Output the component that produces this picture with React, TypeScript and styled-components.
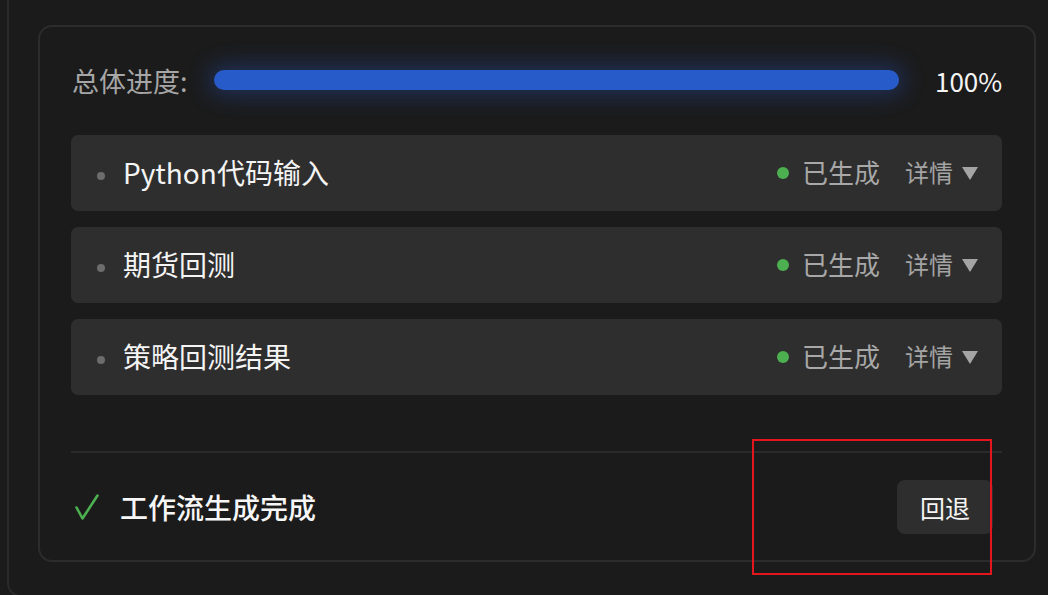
import styled, { createGlobalStyle } from 'styled-components';

const GlobalStyle = createGlobalStyle`
  html, body {
    margin: 0;
    padding: 0;
    background: #1b1b1b;
    overflow: hidden;
  }
  body {
    font-family: 'Noto Sans CJK SC', 'Noto Sans', sans-serif;
    color: #f2f2f2;
  }
`;

const STEPS = ['Python代码输入', '期货回测', '策略回测结果'];

export default function App() {
  return (
    <Page>
      <GlobalStyle />
      <OuterPanel>
        <Card>
          <ProgressRow>
            <ProgressLabel>总体进度:</ProgressLabel>
            <Track>
              <Fill style={{ width: '100%' }} />
            </Track>
            <Percent>100%</Percent>
          </ProgressRow>

          <StepList>
            {STEPS.map(step => (
              <StepRow key={step}>
                <Bullet />
                <StepTitle>{step}</StepTitle>
                <StatusDot />
                <StatusText>已生成</StatusText>
                <DetailToggle>
                  详情
                  <Caret viewBox="0 0 16 13">
                    <path d="M0 0 H16 L8 13 Z" fill="currentColor" />
                  </Caret>
                </DetailToggle>
              </StepRow>
            ))}
          </StepList>

          <Footer>
            <DoneInfo>
              <CheckMark viewBox="0 0 24 26">
                <path
                  d="M1.5 13.5 L7.5 24.5 L22.5 1.5"
                  fill="none"
                  stroke="#4caf50"
                  strokeWidth="2.6"
                  strokeLinecap="round"
                  strokeLinejoin="round"
                />
              </CheckMark>
              <DoneText>工作流生成完成</DoneText>
            </DoneInfo>
            <BackButton>回退</BackButton>
          </Footer>
        </Card>
      </OuterPanel>
      <Annotation />
    </Page>
  );
}

const Page = styled.div`
  position: relative;
  width: 1048px;
  height: 595px;
  overflow: hidden;
`;

const OuterPanel = styled.div`
  box-sizing: border-box;
  margin: -20px 0 0 7px;
  width: 1100px;
  height: 617px;
  border: 2px solid #2a2a2a;
  border-radius: 14px;
  padding: 43px 0 0 29px;
`;

const Card = styled.div`
  box-sizing: border-box;
  width: 998px;
  height: 537px;
  border: 2px solid #2c2c2c;
  border-radius: 14px;
  background: #1b1b1b;
  padding: 33px 32px 0 31px;
  display: flex;
  flex-direction: column;
`;

const ProgressRow = styled.div`
  display: flex;
  align-items: center;
  height: 40px;
`;

const ProgressLabel = styled.span`
  font-size: 27px;
  color: #a6a6a6;
  width: 142px;
  flex-shrink: 0;
  margin-left: 1px;
`;

const Track = styled.div`
  flex: 1;
  height: 20px;
  border-radius: 10px;
  background: #2a2a2a;
  box-shadow: 0 0 22px 6px rgba(40, 90, 210, 0.32);
`;

const Fill = styled.div`
  height: 100%;
  border-radius: 10px;
  background: #285bca;
`;

const Percent = styled.span`
  font-size: 26px;
  color: #f5f5f5;
  margin-left: 36px;
  width: 67px;
  text-align: right;
  flex-shrink: 0;
`;

const StepList = styled.div`
  display: flex;
  flex-direction: column;
  gap: 16px;
  margin-top: 35px;
`;

const StepRow = styled.div`
  display: flex;
  align-items: center;
  height: 76px;
  padding: 0 24px 0 26px;
  background: #2e2e2e;
  border-radius: 7px;
`;

const Bullet = styled.span`
  width: 8px;
  height: 8px;
  border-radius: 50%;
  background: #6c6c6c;
  margin: 6px 18px 0 0;
  flex-shrink: 0;
`;

const StepTitle = styled.span`
  flex: 1;
  font-size: 28px;
  color: #f4f4f4;
  margin-top: -3px;
`;

const StatusDot = styled.span`
  width: 12px;
  height: 12px;
  border-radius: 50%;
  background: #4caf50;
  margin-right: 13px;
`;

const StatusText = styled.span`
  font-size: 26px;
  color: #a8a8a8;
  margin-right: 25px;
  margin-top: -3px;
`;

const DetailToggle = styled.span`
  display: flex;
  align-items: center;
  gap: 9px;
  font-size: 24px;
  color: #a4a4a4;
  margin-top: -3px;
`;

const Caret = styled.svg`
  width: 16px;
  height: 13px;
  color: #a4a4a4;
  margin-top: 3px;
`;

const Footer = styled.div`
  flex: 1;
  display: flex;
  align-items: center;
  justify-content: space-between;
  margin-top: 56px;
  border-top: 2px solid #2a2a2a;
  padding: 0 9px 0 4px;
`;

const DoneInfo = styled.div`
  display: flex;
  align-items: center;
  gap: 21px;
`;

const CheckMark = styled.svg`
  width: 24px;
  height: 26px;
`;

const DoneText = styled.span`
  font-size: 28px;
  font-weight: 500;
  color: #f6f6f6;
`;

const BackButton = styled.button`
  height: 54px;
  padding: 0 23px;
  border: none;
  border-radius: 8px;
  background: #2e2e2e;
  color: #f4f4f4;
  font-family: inherit;
  font-size: 25px;
  cursor: pointer;
`;

const Annotation = styled.div`
  position: absolute;
  left: 752px;
  top: 439px;
  width: 240px;
  height: 136px;
  box-sizing: border-box;
  border: 2px solid #e3161d;
  pointer-events: none;
`;
